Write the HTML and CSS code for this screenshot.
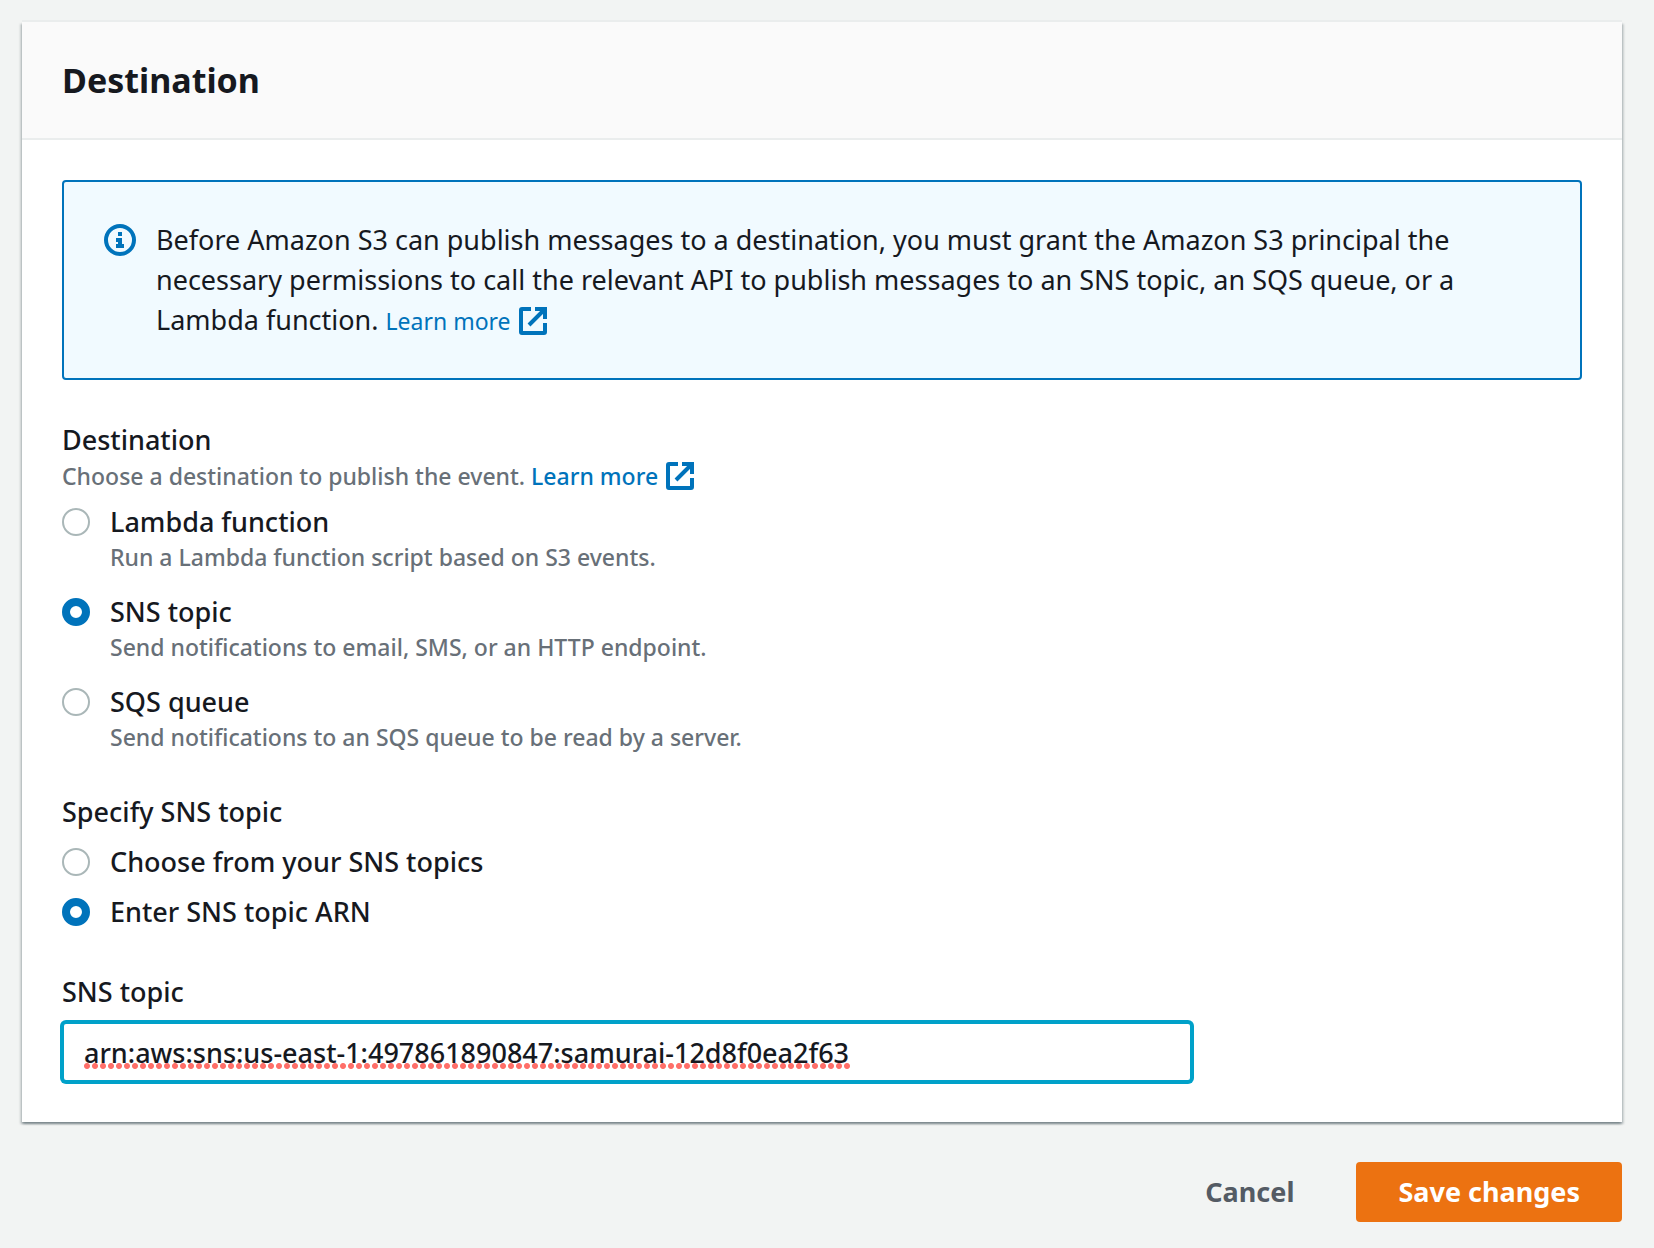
FILE: index.html
```html
<!DOCTYPE html>
<html lang="en">
<head>
  <meta charset="utf-8">
  <meta name="viewport" content="width=device-width, initial-scale=1">
  <title>Destination</title>
  <link rel="stylesheet" href="styles.css">
</head>
<body>
  <svg class="sprite" aria-hidden="true">
    <symbol id="external" viewBox="0 0 28 28">
      <path d="M12 2H3a1 1 0 0 0-1 1v22a1 1 0 0 0 1 1h22a1 1 0 0 0 1-1v-9M16 2h10v10M26 2 10 18" fill="none" stroke="currentColor" stroke-width="4"/>
    </symbol>
  </svg>
  <form class="page">
    <section class="card">
      <header class="card-header"><h2 class="card-title">Destination</h2></header>
      <div class="card-body">
        <div class="alert">
          <svg class="alert-icon" viewBox="0 0 32 32" aria-hidden="true">
            <circle cx="16" cy="16" r="14" fill="none" stroke="currentColor" stroke-width="4"/>
            <path d="M14 8h4v4h-4zM12 14h6v6h2v4h-8v-4h2v-2h-2z" fill="currentColor"/>
          </svg>
          <p class="alert-text">Before Amazon S3 can publish messages to a destination, you must grant the Amazon S3 principal the necessary permissions to call the relevant API to publish messages to an SNS topic, an SQS queue, or a Lambda function. <a class="link" href="#">Learn more<svg class="link-icon" aria-hidden="true"><use href="#external"/></svg></a></p>
        </div>

        <fieldset class="group">
          <legend class="label">Destination</legend>
          <p class="hint">Choose a destination to publish the event. <a class="link" href="#">Learn more<svg class="link-icon" aria-hidden="true"><use href="#external"/></svg></a></p>
          <div class="options options-detailed">
            <label class="option">
              <input class="radio" type="radio" name="destination">
              <span class="label">Lambda function</span>
              <span class="description">Run a Lambda function script based on S3 events.</span>
            </label>
            <label class="option">
              <input class="radio" type="radio" name="destination" checked>
              <span class="label">SNS topic</span>
              <span class="description">Send notifications to email, SMS, or an HTTP endpoint.</span>
            </label>
            <label class="option">
              <input class="radio" type="radio" name="destination">
              <span class="label">SQS queue</span>
              <span class="description">Send notifications to an SQS queue to be read by a server.</span>
            </label>
          </div>
        </fieldset>

        <fieldset class="group">
          <legend class="label">Specify SNS topic</legend>
          <div class="options options-simple">
            <label class="option">
              <input class="radio" type="radio" name="source">
              <span class="label">Choose from your SNS topics</span>
            </label>
            <label class="option">
              <input class="radio" type="radio" name="source" checked>
              <span class="label">Enter SNS topic ARN</span>
            </label>
          </div>
        </fieldset>

        <div class="group field">
          <label class="label" for="arn">SNS topic</label>
          <div class="input-wrap">
            <input class="input" id="arn" type="text" spellcheck="false" value="arn:aws:sns:us-east-1:497861890847:samurai-12d8f0ea2f63">
            <span class="spelling" aria-hidden="true"></span>
          </div>
        </div>
      </div>
    </section>
    <div class="actions">
      <button class="button" type="button">Cancel</button>
      <button class="button button-primary" type="submit">Save changes</button>
    </div>
  </form>
</body>
</html>
```
FILE: styles.css
```css
*, *::before, *::after { box-sizing: border-box; }

body {
  margin: 0;
  background: #f2f4f3;
  color: #16191f;
  font: 500 27px/40px "Noto Sans", "Open Sans", sans-serif;
}

h2, p, fieldset, legend { margin: 0; padding: 0; border: 0; }

.sprite { display: none; }

.page { padding: 22px 32px 26px 22px; }

.card {
  background: #fff;
  box-shadow: 0 2px 2px 0 rgba(0, 28, 36, 0.3), 2px 2px 2px 0 rgba(0, 28, 36, 0.15), -2px 2px 2px 0 rgba(0, 28, 36, 0.15), 0 -2px 0 0 #eaeded;
}

.card-header {
  padding: 36px 40px;
  background: #fafafa;
  border-bottom: 2px solid #eaeded;
}

.card-title { font-size: 34px; line-height: 44px; font-weight: 700; }

.card-body { padding: 40px; }

.alert {
  display: flex;
  gap: 20px;
  margin-bottom: 42px;
  padding: 38px 40px;
  font-weight: 400;
  background: #f1faff;
  border: 2px solid #0073bb;
  border-radius: 4px;
}

.alert-icon { flex: none; width: 32px; height: 32px; margin-top: 4px; color: #0073bb; }

.link { color: #0073bb; font-size: 23px; line-height: 28px; text-decoration: none; white-space: nowrap; }

.link-icon { width: 28px; height: 28px; margin-left: 8px; vertical-align: -5px; }

.group + .group { margin-top: 40px; }

.label { display: block; line-height: 36px; }

.hint { color: #687078; font-size: 23px; line-height: 36px; }

.options { display: flex; flex-direction: column; }

.options-detailed { gap: 20px; margin-top: 10px; }

.options-simple { gap: 14px; margin-top: 14px; }

.option {
  display: grid;
  grid-template-columns: 28px 1fr;
  column-gap: 20px;
  align-items: center;
}

.radio {
  appearance: none;
  width: 28px;
  height: 28px;
  margin: 0;
  background: #fff;
  border: 2px solid #aab7b8;
  border-radius: 50%;
}

.radio:checked { border: 8px solid #0073bb; }

.description { grid-column: 2; color: #687078; font-size: 23px; line-height: 34px; }

.group + .field { margin-top: 44px; }

.input-wrap { position: relative; width: calc(75% - 10px); margin-top: 12px; }

.input {
  display: block;
  width: 100%;
  height: 60px;
  padding: 4px 20px;
  color: inherit;
  font: inherit;
  background: #fff;
  border: 2px solid #00a1c9;
  border-radius: 4px;
  box-shadow: 0 0 0 2px #00a1c9;
  outline: 0;
}

/* spell-check dots under the value */
.spelling {
  position: absolute;
  left: 22px;
  bottom: 13px;
  width: 768px;
  height: 6px;
  background: radial-gradient(circle at 3px 3px, #ff6f69 2.5px, transparent 3.5px) 0 0 / 8px 6px repeat-x;
  pointer-events: none;
}

.actions { display: flex; justify-content: flex-end; gap: 20px; margin-top: 40px; }

.button {
  height: 60px;
  padding: 0 42px;
  color: #545b64;
  font: inherit;
  font-weight: 700;
  background: transparent;
  border: 0;
  border-radius: 4px;
}

.button-primary { color: #fff; background: #ec7211; }
```
